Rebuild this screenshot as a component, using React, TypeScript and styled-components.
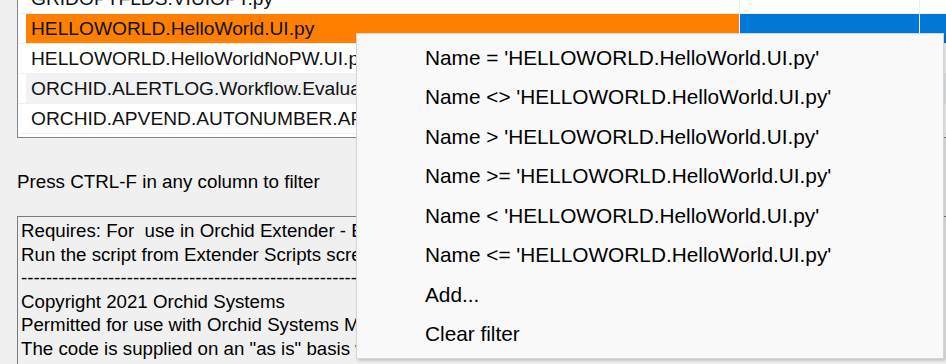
import React from 'react';
import styled, { createGlobalStyle } from 'styled-components';

const GlobalStyle = createGlobalStyle`
  html, body {
    margin: 0;
    padding: 0;
    background-color: #F0F0F0;
    overflow: hidden;
  }
  * {
    box-sizing: border-box;
  }
`;

const Window = styled.div`
  position: relative;
  width: 946px;
  height: 364px;
  overflow: hidden;
  background-color: #F0F0F0;
  font-family: 'Liberation Sans', Arial, sans-serif;
  color: #000000;
`;

const Content = styled.div`
  display: flex;
  flex-direction: column;
  padding-left: 17px;
`;

const Grid = styled.div`
  height: 138px;
  width: 1000px;
  background-color: #FFFFFF;
  border-left: 1px solid #828790;
  border-bottom: 1px solid #828790;
  overflow: hidden;
`;

const GridBody = styled.div`
  display: flex;
  flex-direction: column;
  margin-top: -16px;
`;

const Row = styled.div<{ $tint?: boolean }>`
  display: grid;
  grid-template-columns: 8px 714px 180px 1fr;
  height: 30px;
  background-color: ${p => (p.$tint ? '#F1F2F4' : '#FFFFFF')};
`;

const RowHeader = styled.div`
  background-color: #FFFFFF;
  border-bottom: 1px solid #F0F0F0;
`;

const Cell = styled.div<{ $fill?: string }>`
  display: flex;
  align-items: center;
  padding-left: 5px;
  font-size: 19.2px;
  white-space: nowrap;
  overflow: hidden;
  color: #111111;
  background-color: ${p => p.$fill ?? 'transparent'};
  border-right: 1px solid #EDEDED;
  border-bottom: 1px solid #F0F0F0;
  background-clip: padding-box;
`;

const Hint = styled.div`
  margin-top: 32px;
  font-size: 18.8px;
  line-height: 23px;
  white-space: nowrap;
`;

const Notes = styled.div`
  margin-top: 23px;
  width: 1000px;
  height: 200px;
  border-top: 1px solid #7A7A7A;
  border-left: 1px solid #7A7A7A;
  padding: 2px 3px;
  font-size: 18.7px;
  line-height: 23.5px;
  white-space: pre;
  overflow: hidden;
`;

const Menu = styled.div`
  position: absolute;
  left: 356px;
  top: 33px;
  width: 588px;
  height: 326px;
  background-color: #F9F9F9;
  border: 1px solid #D6D6D6;
  box-shadow: 2px 2px 3px rgba(0, 0, 0, 0.18);
  padding-top: 4px;
  display: flex;
  flex-direction: column;
`;

const MenuItem = styled.div`
  display: flex;
  align-items: center;
  height: 39.5px;
  padding-left: 68px;
  font-size: 20.8px;
  white-space: nowrap;
  color: #000000;
`;

const rows = [
  { name: 'GRIDOPTFLDS.VIUIOPT.py' },
  { name: 'HELLOWORLD.HelloWorld.UI.py', selected: true },
  { name: 'HELLOWORLD.HelloWorldNoPW.UI.py' },
  { name: 'ORCHID.ALERTLOG.Workflow.Evaluate.py', tint: true },
  { name: 'ORCHID.APVEND.AUTONUMBER.APVEND.py' },
  { name: 'ORCHID.APVEND.VENDORCHECK.py' },
];

const noteLines = [
  'Requires: For  use in Orchid Extender - Extender Scripts',
  'Run the script from Extender Scripts screen',
  '-'.repeat(120),
  'Copyright 2021 Orchid Systems',
  'Permitted for use with Orchid Systems Maintained Extender Licenses',
  'The code is supplied on an "as is" basis without warranty',
  'If this script is to be used to make changes to the data of the Sage 300',
];

const value = "'HELLOWORLD.HelloWorld.UI.py'";
const menuItems = [
  `Name = ${value}`,
  `Name <> ${value}`,
  `Name > ${value}`,
  `Name >= ${value}`,
  `Name < ${value}`,
  `Name <= ${value}`,
  'Add...',
  'Clear filter',
];

const App: React.FC = () => {
  return (
    <Window>
      <GlobalStyle />
      <Content>
        <Grid>
          <GridBody>
            {rows.map((row, i) => (
              <Row key={i} $tint={row.tint}>
                <RowHeader />
                <Cell $fill={row.selected ? '#FF8000' : undefined}>{row.name}</Cell>
                <Cell $fill={row.selected ? '#0078D7' : undefined} />
                <Cell $fill={row.selected ? '#0078D7' : undefined} />
              </Row>
            ))}
          </GridBody>
        </Grid>
        <Hint>Press CTRL-F in any column to filter</Hint>
        <Notes>{noteLines.join('\n')}</Notes>
      </Content>
      <Menu>
        {menuItems.map((item, i) => (
          <MenuItem key={i}>{item}</MenuItem>
        ))}
      </Menu>
    </Window>
  );
};

export default App;
